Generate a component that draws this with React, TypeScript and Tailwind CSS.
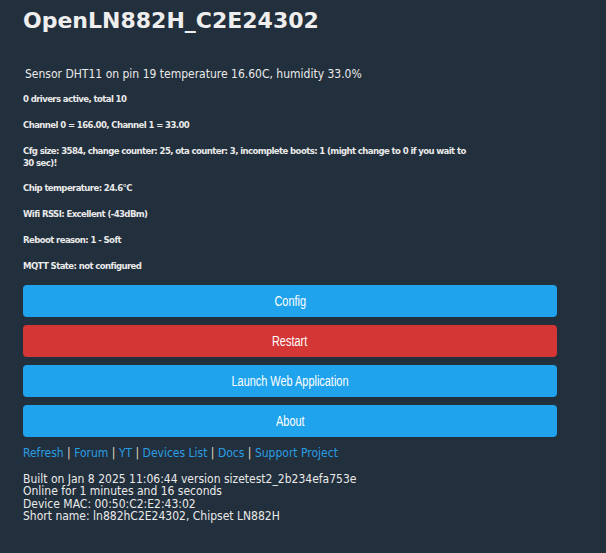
import React from "react";

const info = [
  "0 drivers active, total 10",
  "Channel 0 = 166.00, Channel 1 = 33.00",
];

const info2 = [
  "Chip temperature: 24.6°C",
  "Wifi RSSI: Excellent (-43dBm)",
  "Reboot reason: 1 - Soft",
  "MQTT State: not configured",
];

const buttons = [
  { label: "Config", cls: "bg-[#1fa3ec]" },
  { label: "Restart", cls: "bg-[#d43535]" },
  { label: "Launch Web Application", cls: "bg-[#1fa3ec]" },
  { label: "About", cls: "bg-[#1fa3ec]" },
];

const links = ["Refresh", "Forum", "YT", "Devices List", "Docs", "Support Project"];

function App() {
  return (
    <div className="min-h-[553px] w-full bg-[#222f3c] text-[#eaeaea] font-['DejaVu_Sans_Condensed','DejaVu_Sans',sans-serif]">
      <div className="w-[534px] ml-[23px] pt-[8px]">
        <h1 className="text-[22px] leading-[26px] font-bold font-['DejaVu_Sans',sans-serif] text-[#eeeeee]">
          OpenLN882H_C2E24302
        </h1>
        <div className="mt-[33px] ml-[2px] text-[12px] leading-[14px]">
          Sensor DHT11 on pin 19 temperature 16.60C, humidity 33.0%
        </div>
        <div className="mt-[12px] flex flex-col gap-[14px] text-[9.5px] leading-[12px] font-bold tracking-[-0.6px]">
          {info.map((t) => (
            <div key={t}>{t}</div>
          ))}
          <div className="leading-[11.5px]">
            Cfg size: 3584, change counter: 25, ota counter: 3, incomplete boots: 1 (might change to 0 if you wait to
            <br />
            30 sec)!
          </div>
          {info2.map((t) => (
            <div key={t}>{t}</div>
          ))}
        </div>
        <div className="mt-[13px] flex flex-col gap-[8px]">
          {buttons.map((b) => (
            <button
              key={b.label}
              className={`${b.cls} h-[32px] w-full rounded-[4px] text-white text-[14px] font-['Liberation_Sans',sans-serif]`}
            >
              <span className="inline-block scale-x-[0.78]">{b.label}</span>
            </button>
          ))}
        </div>
        <div className="mt-[9px] text-[12px] leading-[14px]">
          {links.map((l, i) => (
            <span key={l}>
              {i > 0 && <span className="text-[#e8dcc0]"> | </span>}
              <a className="text-[#2a9ee4]">{l}</a>
            </span>
          ))}
        </div>
        <div className="mt-[13px] text-[12px] leading-[12.4px]">
          <div>Built on Jan 8 2025 11:06:44 version sizetest2_2b234efa753e</div>
          <div>Online for 1 minutes and 16 seconds</div>
          <div>Device MAC: 00:50:C2:E2:43:02</div>
          <div>Short name: ln882hC2E24302, Chipset LN882H</div>
        </div>
      </div>
    </div>
  );
}

export default App;
